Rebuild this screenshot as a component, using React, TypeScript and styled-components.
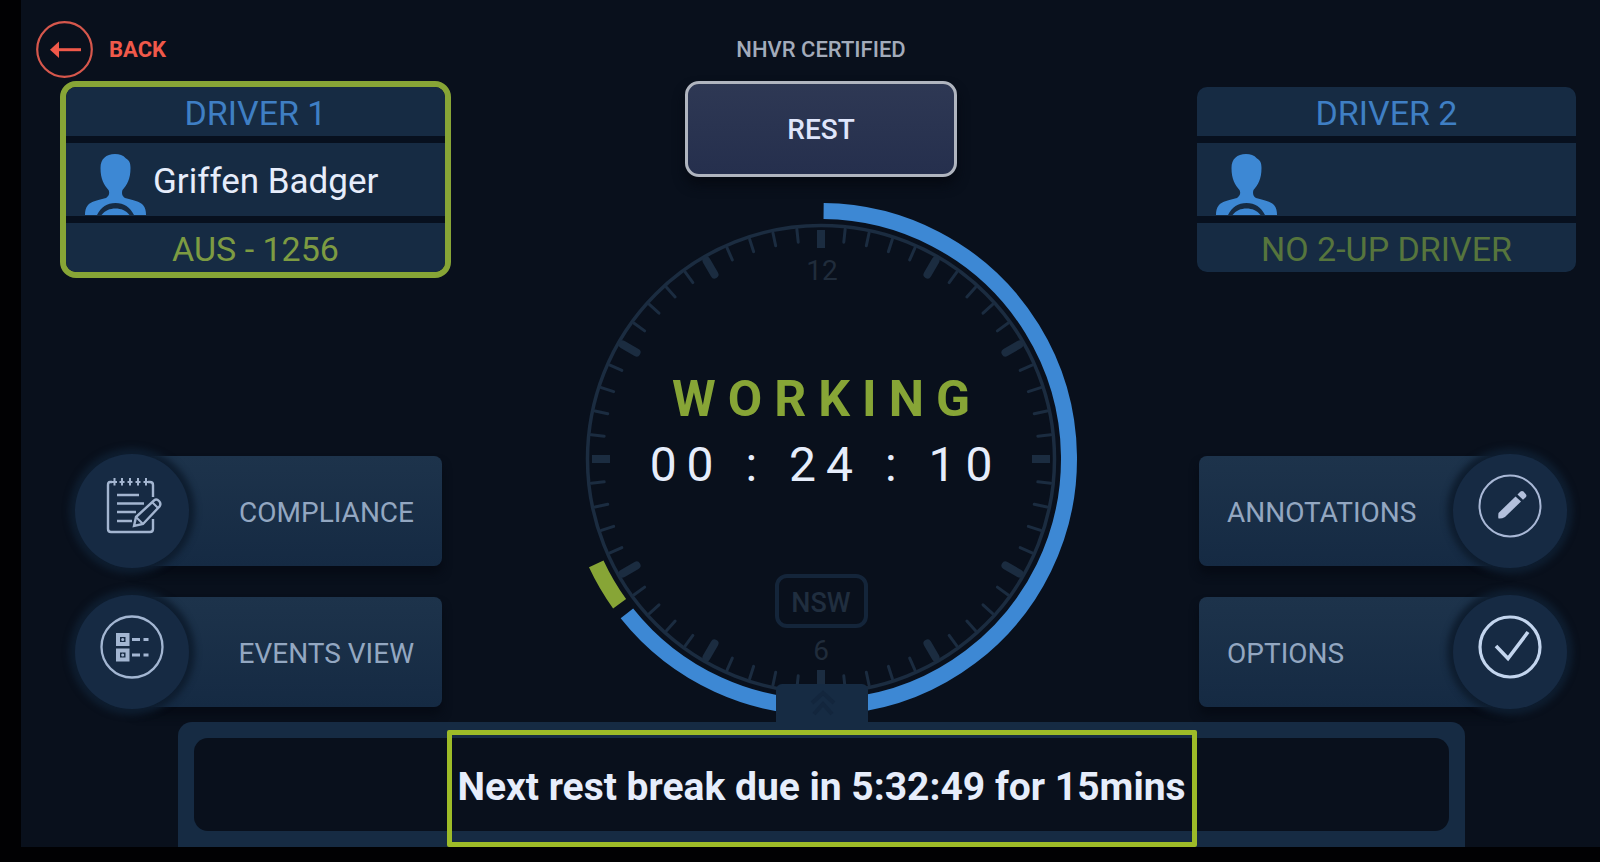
import React from "react";
import styled, { createGlobalStyle } from "styled-components";

const color = {
  page: "#010103",
  app: "#09101c",
  panel: "#162b43",
  blue: "#3d88d4",
  green: "#87a536",
  highlight: "#9dbb28",
  muted: "#93a7c1",
  faint: "#1b2c40",
  light: "#e6edfb",
};

const GlobalStyle = createGlobalStyle`
  *, *::before, *::after { box-sizing: border-box; }
  body {
    margin: 0;
    background: ${color.page};
    font-family: Roboto, "Liberation Sans", sans-serif;
  }
  button { font-family: inherit; cursor: pointer; }
`;

const Page = styled.div`
  min-height: 100vh;
  padding: 0 0 15px 21px;
  background: ${color.page};
`;

const Screen = styled.div`
  display: flex;
  flex-direction: column;
  min-height: calc(100vh - 15px);
  background: ${color.app};
`;

const Header = styled.header`
  display: grid;
  grid-template-columns: 1fr auto 1fr;
  align-items: center;
  padding: 21px 18px 0 39px;
`;

const BackButton = styled.button`
  display: flex;
  align-items: center;
  justify-self: start;
  gap: 16px;
  height: 57px;
  margin-left: -24px;
  padding: 0;
  border: 0;
  background: none;
  color: #f0594a;
  font-size: 22px;
  font-weight: 700;
`;

const Certified = styled.span`
  color: #a3abba;
  font-size: 22px;
  font-weight: 500;
`;

const Main = styled.main`
  display: grid;
  flex: 1;
  grid-template-columns: 391px minmax(520px, 1fr) 391px;
  padding: 3px 18px 3px 39px;
`;

const Side = styled.section`
  display: flex;
  flex-direction: column;
  justify-content: space-between;
  padding-bottom: 12px;
`;

const Centre = styled.section`
  display: flex;
  flex-direction: column;
  align-items: center;
  justify-content: space-between;
  gap: 22px;
`;

const DriverCard = styled.article<{ $active?: boolean }>`
  display: grid;
  grid-template-rows: 49px 73px 49px;
  gap: 7px;
  overflow: hidden;
  border: 6px solid ${(p) => (p.$active ? color.green : "transparent")};
  border-radius: 16px;
  background: #07101e;
  background-clip: padding-box;
`;

const DriverRow = styled.div<{ $tone: "blue" | "green" | "dim" }>`
  display: flex;
  align-items: center;
  justify-content: center;
  padding-top: 3px;
  background: ${color.panel};
  color: ${(p) => ({ blue: "#3f7fc4", green: "#7d9b42", dim: "#56753d" })[p.$tone]};
  font-size: 34px;
  line-height: 40px;
`;

const DriverName = styled.div`
  display: flex;
  align-items: flex-end;
  gap: 7px;
  padding-left: 19px;
  background: ${color.panel};
  color: ${color.light};
  font-size: 35px;
  line-height: 68px;
`;

const Menu = styled.nav`
  display: flex;
  flex-direction: column;
  gap: 31px;
  padding: 0 9px 0 13px;
`;

const RightMenu = styled(Menu)`
  padding: 0 13px 0 8px;
`;

const MenuButton = styled.button<{ $flip?: boolean }>`
  position: relative;
  display: flex;
  flex-direction: ${(p) => (p.$flip ? "row-reverse" : "row")};
  align-items: center;
  justify-content: space-between;
  height: 110px;
  padding: 0;
  border: 0;
  background: none;
  color: ${color.muted};
  font-size: 28px;

  &::before {
    content: "";
    position: absolute;
    inset: ${(p) => (p.$flip ? "0 60px 0 0" : "0 0 0 60px")};
    border-radius: 8px;
    background: linear-gradient(#1d334b, #152a43);
    box-shadow: 0 8px 10px #060b15;
  }
`;

const Knob = styled.span`
  position: relative;
  display: grid;
  place-items: center;
  width: 114px;
  height: 114px;
  margin: 0 2px;
  padding-bottom: 10px;
  border-radius: 50%;
  background: #162a43;
  box-shadow: 0 0 6px 6px #0e1d2f;
`;

const MenuLabel = styled.span`
  position: relative;
  padding: 3px 28px 0;
`;

const RestButton = styled.button`
  width: 272px;
  height: 96px;
  border: 3px solid #b0b5bf;
  border-radius: 14px;
  background: linear-gradient(#2e3854, #252f4d);
  box-shadow: 0 8px 12px #060a13;
  color: #dfe5fb;
  font-size: 28px;
  font-weight: 500;
`;

const Clock = styled.div`
  position: relative;
  width: 520px;
  height: 520px;
`;

const Readout = styled.div`
  position: absolute;
  inset: 0;
  display: flex;
  flex-direction: column;
  align-items: center;
  padding-top: 166px;
`;

const Status = styled.strong`
  color: ${color.green};
  font-size: 50px;
  font-weight: 700;
  line-height: 68px;
  letter-spacing: 12px;
  text-indent: 12px;
`;

const Timer = styled.time`
  color: ${color.light};
  font-size: 48px;
  line-height: 64px;
  letter-spacing: 10px;
  text-indent: 10px;
  white-space: nowrap;
`;

const Region = styled.span`
  display: grid;
  place-items: center;
  width: 93px;
  height: 54px;
  margin-top: 77px;
  padding-top: 3px;
  border: 4px solid #14253a;
  border-radius: 12px;
  color: #202e3f;
  font-size: 27px;
  font-weight: 500;
`;

const Panel = styled.footer`
  position: relative;
  margin: 0 135px 0 157px;
  padding: 16px;
  border-radius: 14px 14px 0 0;
  background: ${color.panel};
`;

const PanelTab = styled.button`
  position: absolute;
  bottom: 100%;
  left: 50%;
  display: grid;
  place-items: center;
  width: 92px;
  height: 38px;
  margin-left: -46px;
  padding: 0 0 0 2px;
  border: 0;
  border-radius: 6px 6px 0 0;
  background: ${color.panel};
`;

const Notice = styled.p`
  display: flex;
  align-items: center;
  justify-content: center;
  height: 93px;
  margin: 0;
  padding-top: 5px;
  border-radius: 14px;
  background: ${color.app};
  color: ${color.light};
  font-size: 39px;
  font-weight: 700;
  white-space: nowrap;
`;

const Highlight = styled.div`
  position: absolute;
  top: 8px;
  bottom: 0;
  left: 50%;
  width: 750px;
  margin-left: -375px;
  border: 5px solid ${color.highlight};
  border-radius: 2px;
  pointer-events: none;
`;

function BackIcon() {
  return (
    <svg width="57" height="57" viewBox="0 0 57 57" aria-hidden="true">
      <circle cx="28.5" cy="28.5" r="27.3" fill="none" stroke="#d6574c" strokeWidth="2.2" />
      <path d="M22 28.7H45" stroke="#f0594a" strokeWidth="3" />
      <path d="M14 28.7L23 20.5V37Z" fill="#f0594a" />
    </svg>
  );
}

function DriverIcon() {
  return (
    <svg width="61" height="73" viewBox="0 -11 61 73" aria-hidden="true">
      <g fill={color.blue}>
        <path d="M30 0C21 0 15.500 5 15.500 14C15.500 25 19 31 23.500 36C25 39 24 42 21 44C13 46 6 47.500 3 51C0.500 54 0 57 0 61H12C16 53 22 49 30.500 49C39 49 45 53 49 61H61C61 57 60.500 54 58 51C55 47.500 48 46 40 44C37 42 36.500 39 37.500 36C42 31 45.500 25 45.500 14C45.500 9 44.500 6.500 41 4.500C38 1 34.500 0 30 0Z" />
        <path d="M16.500 61C20 56.500 25 54.500 30.500 54.500C36 54.500 41 56.500 44.500 61Z" />
      </g>
    </svg>
  );
}

function ComplianceIcon() {
  return (
    <svg width="62" height="60" viewBox="-4 0 62 60" fill="none" stroke="#a3b5d0" strokeWidth="2.400" aria-hidden="true">
      <path d="M7 6H5Q3 6 3 9V53Q3 56 6 56H45Q48 56 48 53V43M48 21V9Q48 6 45 6H43" />
      <path d="M9.500 2V9.500M17 2V9.500M25 2V9.500M33 2V9.500M41 2V9.500" strokeWidth="2" />
      <path d="M7 6H12M14.500 6H19.500M22.500 6H27.500M30.500 6H35.500M38.500 6H43" strokeWidth="2" />
      <path d="M12 19H34M12 27.500H39M12 36H31M12 45H27" />
      <path d="M29 50L31 41L49 24.500Q51.500 22.500 54 25Q56.500 27.500 54.500 30.500L38 48Z" />
      <path d="M47.500 26.500L53 32M31 41L38 48" strokeWidth="2" />
    </svg>
  );
}

function EventsIcon() {
  return (
    <svg width="64" height="64" viewBox="0 0 64 64" fill="none" stroke="#a3b6d2" aria-hidden="true">
      <circle cx="32" cy="32" r="30.500" strokeWidth="2.300" />
      <rect x="18" y="20" width="9.500" height="9" strokeWidth="4" />
      <rect x="18" y="35.500" width="9.500" height="9" strokeWidth="4" />
      <circle cx="22.700" cy="24.500" r="0.800" strokeWidth="1.500" />
      <circle cx="22.700" cy="40" r="0.800" strokeWidth="1.500" />
      <path d="M32 24.500H40M43.500 24.500H48.500M32 40H40M43.500 40H48.500" strokeWidth="3" />
    </svg>
  );
}

function PencilIcon() {
  return (
    <svg width="64" height="64" viewBox="0 0 64 64" aria-hidden="true">
      <circle cx="32" cy="32" r="30.500" fill="none" stroke="#a9b8d6" strokeWidth="2" />
      <g fill="#b3c0dc">
        <path d="M20.500 44.500Q20 43 20.500 39L37.500 22.500L43 27.500L27 43Q23.500 45 20.500 44.500Z" />
        <path d="M39.500 20.500L42.500 17.500Q44 16.500 45.500 17.500L48 20.500Q49 22 47.500 23.500L45 25.800Z" />
      </g>
    </svg>
  );
}

function CheckIcon() {
  return (
    <svg width="64" height="64" viewBox="0 0 64 64" fill="none" stroke="#c3d5ee" aria-hidden="true">
      <circle cx="32" cy="32" r="30" strokeWidth="3.200" />
      <path d="M18 31L30 43.500L50 17" strokeWidth="3.600" />
    </svg>
  );
}

function polar(radius: number, degrees: number) {
  const angle = (degrees * Math.PI) / 180;
  return `${(radius * Math.sin(angle)).toFixed(2)} ${(-radius * Math.cos(angle)).toFixed(2)}`;
}

function arc(radius: number, from: number, to: number) {
  return `M${polar(radius, from)}A${radius} ${radius} 0 ${to - from > 180 ? 1 : 0} 1 ${polar(radius, to)}`;
}

function ClockFace() {
  const ticks = Array.from({ length: 60 }, (_, i) => i);
  return (
    <svg width="520" height="520" viewBox="-260 -260 520 520" aria-hidden="true">
      <circle r="233.500" fill="none" stroke={color.faint} strokeWidth="3.500" />
      {ticks.map((i) => {
        const major = i % 5 === 0;
        const cardinal = i % 15 === 0;
        return (
          <line
            key={i}
            y1={major ? -229 : -231}
            y2={cardinal ? -211 : major ? -213 : -218}
            transform={`rotate(${i * 6})`}
            stroke={color.faint}
            strokeWidth={major ? 8 : 3}
            strokeLinecap={cardinal ? "butt" : "round"}
          />
        );
      })}
      <g fill="#202c3b" fontSize="28" textAnchor="middle">
        <text x="1" y="-179">12</text>
        <text y="201">6</text>
      </g>
      <g fill="none" strokeWidth="16">
        <path d={arc(248, 0.6, 231.500)} stroke={color.blue} />
        <path d={arc(248, 234.300, 245)} stroke={color.green} />
      </g>
    </svg>
  );
}

export default function App() {
  return (
    <Page>
      <GlobalStyle />
      <Screen>
        <Header>
          <BackButton type="button">
            <BackIcon />
            BACK
          </BackButton>
          <Certified>NHVR CERTIFIED</Certified>
        </Header>
        <Main>
          <Side>
            <DriverCard $active>
              <DriverRow $tone="blue">DRIVER 1</DriverRow>
              <DriverName>
                <DriverIcon />
                Griffen Badger
              </DriverName>
              <DriverRow $tone="green">AUS - 1256</DriverRow>
            </DriverCard>
            <Menu>
              <MenuButton type="button">
                <Knob><ComplianceIcon /></Knob>
                <MenuLabel>COMPLIANCE</MenuLabel>
              </MenuButton>
              <MenuButton type="button">
                <Knob><EventsIcon /></Knob>
                <MenuLabel>EVENTS VIEW</MenuLabel>
              </MenuButton>
            </Menu>
          </Side>
          <Centre>
            <RestButton type="button">REST</RestButton>
            <Clock>
              <ClockFace />
              <Readout>
                <Status>WORKING</Status>
                <Timer>00 : 24 : 10</Timer>
                <Region>NSW</Region>
              </Readout>
            </Clock>
          </Centre>
          <Side>
            <DriverCard>
              <DriverRow $tone="blue">DRIVER 2</DriverRow>
              <DriverName>
                <DriverIcon />
              </DriverName>
              <DriverRow $tone="dim">NO 2-UP DRIVER</DriverRow>
            </DriverCard>
            <RightMenu>
              <MenuButton type="button" $flip>
                <Knob><PencilIcon /></Knob>
                <MenuLabel>ANNOTATIONS</MenuLabel>
              </MenuButton>
              <MenuButton type="button" $flip>
                <Knob><CheckIcon /></Knob>
                <MenuLabel>OPTIONS</MenuLabel>
              </MenuButton>
            </RightMenu>
          </Side>
        </Main>
        <Panel>
          <PanelTab type="button" aria-label="Expand">
            <svg width="26" height="26" viewBox="0 0 26 26" fill="none" stroke="#13263d" strokeWidth="4" aria-hidden="true">
              <path d="M2 13L13 3L24 13M4 24L13 14L22 24" />
            </svg>
          </PanelTab>
          <Notice>Next rest break due in 5:32:49 for 15mins</Notice>
          <Highlight />
        </Panel>
      </Screen>
    </Page>
  );
}
